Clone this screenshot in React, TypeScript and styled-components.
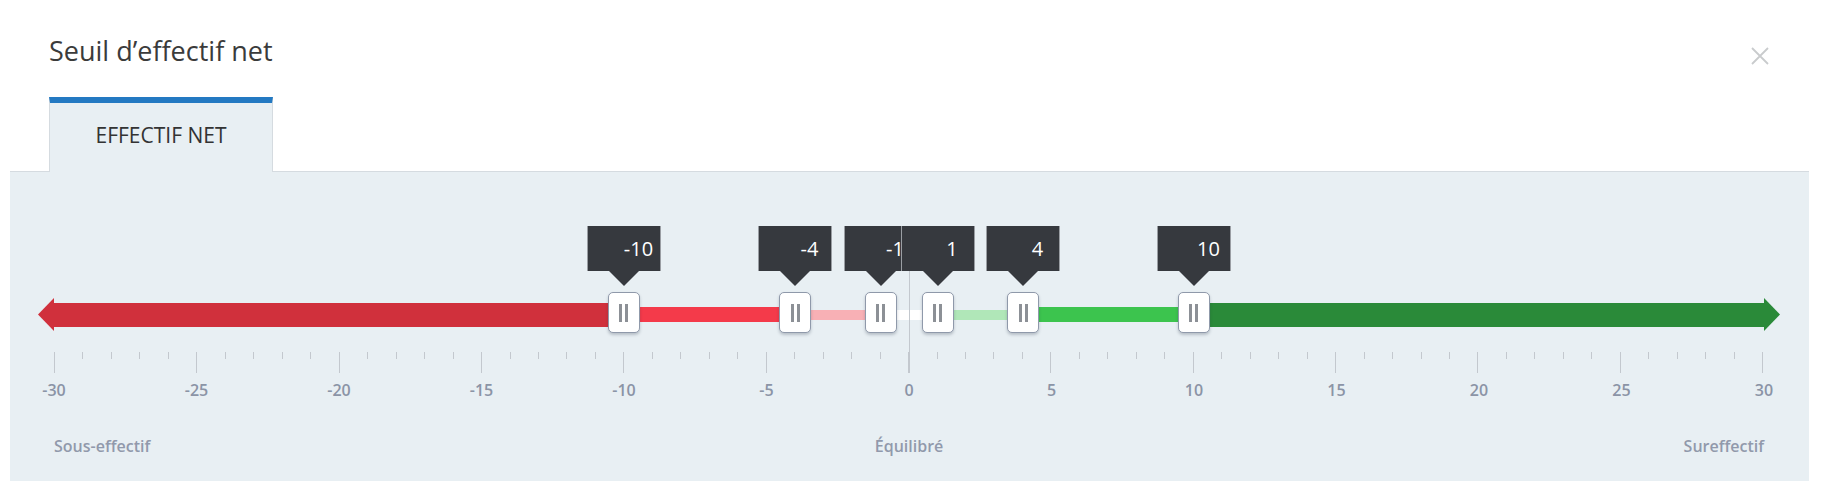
import React from "react";
import styled, { createGlobalStyle } from "styled-components";

const GlobalStyle = createGlobalStyle`
  body {
    margin: 0;
    background: #ffffff;
    font-family: "Open Sans", "Liberation Sans", sans-serif;
  }
`;

const MIN = -30;
const MAX = 30;
const pct = (v: number) => ((v - MIN) / (MAX - MIN)) * 100;

const thresholds = [-10, -4, -1, 1, 4, 10];

const segments = [
  { from: -30, to: -10, h: 24, c: "#d0303c" },
  { from: -10, to: -4, h: 15, c: "#f43a4a" },
  { from: -4, to: -1, h: 10, c: "#f8b0b5" },
  { from: -1, to: 1, h: 10, c: "#ffffff" },
  { from: 1, to: 4, h: 10, c: "#b0e7b8" },
  { from: 4, to: 10, h: 15, c: "#3cc44e" },
  { from: 10, to: 30, h: 24, c: "#2a8a39" },
];

const ticks = Array.from({ length: 61 }, (_, i) => MIN + i);
const labels = Array.from({ length: 13 }, (_, i) => MIN + i * 5);

const App = () => {
  return (
    <Modal>
      <GlobalStyle />
      <Header>
        <Title>Seuil d’effectif net</Title>
        <Close aria-label="Fermer">
          <svg width="18" height="18" viewBox="0 0 18 18">
            <path d="M1 1L17 17M17 1L1 17" stroke="#c9cbcd" strokeWidth="1.8" />
          </svg>
        </Close>
      </Header>
      <Tabs>
        <Tab>Effectif net</Tab>
      </Tabs>
      <Panel>
        <Slider>
          <TrackRow>
            <svg width="16" height="33" viewBox="0 0 16 33">
              <polygon points="16,0 16,33 0,16.5" fill="#d0303c" />
            </svg>
            <Bar>
              {segments.map((s) => (
                <Segment
                  key={s.from}
                  $h={s.h}
                  $c={s.c}
                  style={{ width: `${((s.to - s.from) / (MAX - MIN)) * 100}%` }}
                />
              ))}
            </Bar>
            <svg width="16" height="33" viewBox="0 0 16 33">
              <polygon points="0,0 0,33 16,16.5" fill="#2a8a39" />
            </svg>
          </TrackRow>
          <Ticks>
            {ticks.map((t) => (
              <Tick key={t} $major={t % 5 === 0} />
            ))}
          </Ticks>
          <Numbers>
            {labels.map((l) => (
              <NumCell key={l}>{l}</NumCell>
            ))}
          </Numbers>
          <ZeroLine />
          {thresholds.map((t) => (
            <Handle key={t} style={{ left: `${pct(t)}%` }} />
          ))}
          {thresholds.map((t) => (
            <Tip key={t} style={{ left: `${pct(t)}%` }}>
              {t}
            </Tip>
          ))}
        </Slider>
        <Legend>
          <span>Sous-effectif</span>
          <span>Équilibré</span>
          <RightLabel>Sureffectif</RightLabel>
        </Legend>
      </Panel>
    </Modal>
  );
};

export default App;

const Modal = styled.div`
  padding: 0 12px 0 10px;
`;

const Header = styled.div`
  display: flex;
  justify-content: space-between;
  align-items: flex-start;
  padding: 32px 40px 0 39px;
`;

const Title = styled.h2`
  margin: 0;
  font-size: 27px;
  font-weight: 400;
  line-height: 38px;
  color: #3b3b3b;
`;

const Close = styled.button`
  background: none;
  border: none;
  padding: 0;
  margin-top: 15px;
  display: flex;
  cursor: pointer;
`;

const Tabs = styled.div`
  display: flex;
  padding-left: 39px;
  margin-top: 27px;
`;

const Tab = styled.div`
  position: relative;
  z-index: 1;
  box-sizing: border-box;
  width: 224px;
  height: 75px;
  margin-bottom: -1px;
  padding-bottom: 5px;
  border-top: 6px solid #2379c2;
  border-left: 1px solid #d5dbe0;
  border-right: 1px solid #d5dbe0;
  background: #e8eff3;
  display: flex;
  align-items: center;
  justify-content: center;
  font-size: 21px;
  color: #333;
  text-transform: uppercase;
`;

const Panel = styled.div`
  background: #e8eff3;
  border-top: 1px solid #d5dbe0;
  padding: 0 45px 25px 44px;
`;

const Slider = styled.div`
  position: relative;
  padding-top: 126px;
`;

const TrackRow = styled.div`
  display: flex;
  align-items: center;
  height: 33px;
  margin: 0 -16px;
`;

const Bar = styled.div`
  flex: 1;
  display: flex;
  align-items: center;
`;

const Segment = styled.div<{ $h: number; $c: string }>`
  height: ${({ $h }) => $h}px;
  background: ${({ $c }) => $c};
`;

const Ticks = styled.div`
  display: flex;
  justify-content: space-between;
  align-items: flex-start;
  height: 21px;
  margin-top: 21px;
`;

const Tick = styled.div<{ $major: boolean }>`
  width: 1px;
  height: ${({ $major }) => ($major ? 21 : 7)}px;
  background: #c3c8ce;
`;

const Numbers = styled.div`
  display: flex;
  justify-content: space-between;
  margin-top: 7px;
  height: 20px;
`;

const NumCell = styled.div`
  width: 0;
  display: flex;
  justify-content: center;
  font-size: 16px;
  font-weight: 600;
  line-height: 20px;
  color: #8b94a6;
  white-space: nowrap;
`;

const Legend = styled.div`
  display: grid;
  grid-template-columns: 1fr auto 1fr;
  margin-top: 36px;
  font-size: 16px;
  font-weight: 600;
  line-height: 20px;
  color: #9199ab;
`;

const RightLabel = styled.span`
  text-align: right;
`;

const ZeroLine = styled.div`
  position: absolute;
  left: 50%;
  top: 54px;
  width: 1px;
  height: 147px;
  background: #c3c8ce;
`;

const Handle = styled.div`
  position: absolute;
  top: 120px;
  box-sizing: border-box;
  width: 32px;
  height: 41px;
  margin-left: -16px;
  background: #ffffff;
  border: 1px solid #8f99aa;
  border-radius: 5px;
  box-shadow: 0 2px 3px rgba(40, 50, 70, 0.25);
  display: flex;
  align-items: center;
  justify-content: center;
  gap: 3px;

  &::before,
  &::after {
    content: "";
    width: 3px;
    height: 18px;
    background: #8c9096;
  }
`;

const Tip = styled.div`
  position: absolute;
  top: 54px;
  box-sizing: border-box;
  width: 74px;
  height: 45px;
  margin-left: -37px;
  padding-left: 29px;
  background: #36393e;
  border-left: 1px solid #9a9ea3;
  border-right: 1px solid #9a9ea3;
  color: #ffffff;
  font-size: 20px;
  line-height: 45px;
  text-align: center;

  &::after {
    content: "";
    position: absolute;
    left: 50%;
    top: 45px;
    margin-left: -15px;
    border-left: 15px solid transparent;
    border-right: 15px solid transparent;
    border-top: 15px solid #36393e;
  }
`;
